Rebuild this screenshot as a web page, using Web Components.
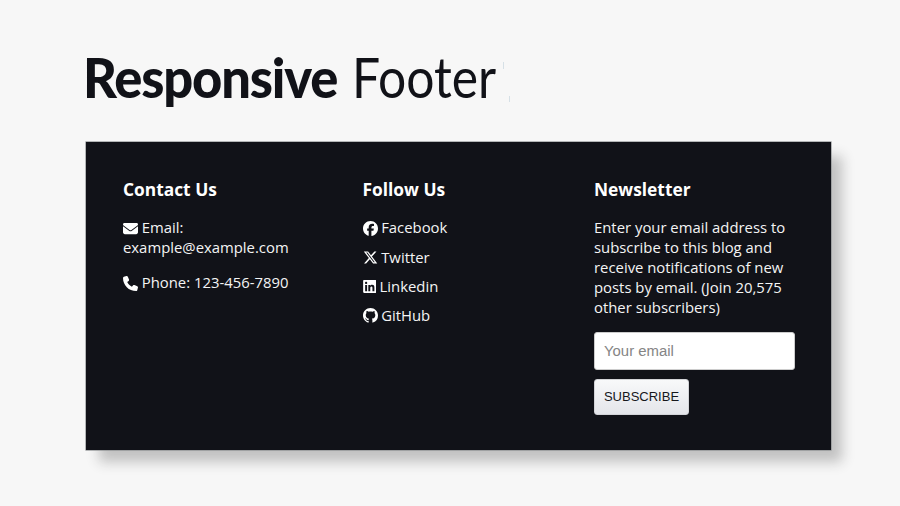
<!DOCTYPE html>
<html lang="en">
<head>
<meta charset="utf-8">
<title>Responsive Footer</title>
<style>
html,body{margin:0;height:100%}
body{background:#f7f7f7;overflow:hidden;font-family:"Open Sans",sans-serif}
</style>
</head>
<body>
<demo-page></demo-page>
<script>
const define = (name, markup) => customElements.define(name, class extends HTMLElement {
  constructor() {
    super();
    const t = document.createElement('template');
    t.innerHTML = markup;
    this.attachShadow({ mode: 'open' }).append(t.content.cloneNode(true));
  }
});

const icons = {
  envelope: ['0 0 512 512', 'M48 64C21.5 64 0 85.5 0 112c0 15.1 7.1 29.3 19.2 38.4L236.8 313.6c11.4 8.5 27 8.5 38.4 0L492.8 150.4c12.1-9.1 19.2-23.3 19.2-38.4c0-26.5-21.5-48-48-48H48zM0 176V384c0 35.3 28.7 64 64 64H448c35.3 0 64-28.7 64-64V176L294.4 339.2c-22.8 17.1-54 17.1-76.8 0L0 176z'],
  phone: ['0 0 512 512', 'M164.9 24.6c-7.7-18.6-28-28.5-47.4-23.2l-88 24C12.1 30.2 0 46 0 64C0 311.4 200.6 512 448 512c18 0 33.8-12.1 38.6-29.5l24-88c5.3-19.4-4.6-39.7-23.2-47.4l-96-40c-16.3-6.8-35.2-2.1-46.3 11.6L304.7 368C234.3 334.7 177.3 277.7 144 207.3L193.3 167c13.7-11.2 18.4-30 11.6-46.3l-40-96z'],
  facebook: ['0 0 512 512', 'M512 256C512 114.6 397.4 0 256 0S0 114.6 0 256C0 376 82.7 476.8 194.2 504.5V334.2H141.4V256h52.8V222.3c0-87.1 39.4-127.5 125-127.5c16.2 0 44.2 3.2 55.7 6.4V172c-6-.6-16.5-1-29.6-1c-42 0-58.2 15.9-58.2 57.2V256h83.6l-14.4 78.2H287V510.1C413.8 494.8 512 386.9 512 256z'],
  x: ['0 0 512 512', 'M389.2 48h70.6L305.6 224.2 487 464H345L233.7 318.6 106.5 464H35.8L200.7 275.5 26.8 48H172.4L272.9 180.9 389.2 48zM364.4 421.8h39.1L151.1 88h-42L364.4 421.8z'],
  linkedin: ['0 0 448 512', 'M416 32H31.9C14.3 32 0 46.5 0 64.3v383.4C0 465.5 14.3 480 31.9 480H416c17.6 0 32-14.5 32-32.3V64.3c0-17.8-14.4-32.3-32-32.3zM135.4 416H69V202.2h66.5V416zm-33.2-243c-21.3 0-38.5-17.3-38.5-38.5S80.9 96 102.2 96c21.2 0 38.5 17.3 38.5 38.5 0 21.3-17.2 38.5-38.5 38.5zm282.1 243h-66.4V312c0-24.8-.5-56.7-34.5-56.7-34.6 0-39.9 27-39.9 54.9V416h-66.4V202.2h63.7v29.2h.9c8.9-16.8 30.6-34.5 62.9-34.5 67.2 0 79.7 44.3 79.7 101.9V416z'],
  github: ['0 0 16 16', 'M8 0C3.58 0 0 3.58 0 8c0 3.54 2.29 6.53 5.47 7.59.4.07.55-.17.55-.38 0-.19-.01-.82-.01-1.49-2.01.37-2.53-.49-2.69-.94-.09-.23-.48-.94-.82-1.13-.28-.15-.68-.52-.01-.53.63-.01 1.08.58 1.23.82.72 1.21 1.87.87 2.33.66.07-.52.28-.87.51-1.07-1.78-.2-3.64-.89-3.64-3.95 0-.87.31-1.59.82-2.15-.08-.2-.36-1.02.08-2.12 0 0 .67-.21 2.2.82.64-.18 1.32-.27 2-.27s1.36.09 2 .27c1.53-1.04 2.2-.82 2.2-.82.44 1.1.16 1.92.08 2.12.51.56.82 1.27.82 2.15 0 3.07-1.87 3.75-3.65 3.95.29.25.54.73.54 1.48 0 1.07-.01 1.93-.01 2.2 0 .21.15.46.55.38A8.01 8.01 0 0016 8c0-4.42-3.58-8-8-8z']
};

customElements.define('app-icon', class extends HTMLElement {
  connectedCallback() {
    if (this.shadowRoot) return;
    const [box, d] = icons[this.getAttribute('name')];
    const w = box.startsWith('0 0 448') ? 13.4 : 15;
    this.attachShadow({ mode: 'open' }).innerHTML =
      `<style>:host{display:inline-block;height:15px;vertical-align:-2.3px;margin-right:3.7px}svg{display:block;height:15px;fill:#fff}</style>
       <svg width="${w}" height="15" viewBox="${box}"><path d="${d}"/></svg>`;
  }
});

define('page-title', `
<style>
:host{display:grid;grid-template-columns:270px 145px auto;height:66px;line-height:66px;font-family:Lato,sans-serif;color:#111218;white-space:nowrap}
b,span{display:block;font-size:55.5px;transform-origin:0 0}
b{font-weight:900;letter-spacing:-1.2px;margin-left:-3.4px;transform:scaleX(.945)}
span{font-weight:400;margin-left:-3.7px;transform:scaleX(.897)}
svg{display:block;margin-top:16px}
</style><b><slot name="strong"></slot></b><span><slot></slot></span>
<svg width="12" height="44" fill="none" stroke="#d6e0e6"><path d="M2.5 2v7M8.5 36v6"/></svg>`);

define('footer-card', `
<style>
:host{display:grid;grid-template-columns:239.5px 231.5px 201px;box-sizing:border-box;width:745px;height:308px;padding:37px 0 0 37px;
background:#111218;box-shadow:0 0 0 .6px #888b8d,12px 13px 12px -1px #c1c1c1}
</style><slot></slot>`);

define('footer-column', `
<style>
:host{display:block;color:#f4f4f4;font-size:14.86px;line-height:20px}
h2{margin:0 0 17.4px;color:#fff;font-size:17.35px;line-height:21px;font-weight:700}
</style><h2><slot name="heading"></slot></h2><slot></slot>`);

define('footer-item', `
<style>
:host{display:block;white-space:nowrap;margin-bottom:var(--gap,9.25px)}
</style><slot></slot>`);

define('newsletter-form', `
<style>
:host{display:flex;flex-direction:column;align-items:flex-start;gap:9px;margin-top:14.6px}
input,button{box-sizing:border-box;font-family:"Liberation Sans",sans-serif;border-radius:3px}
input{width:201px;height:38px;padding:0 9px;border:1px solid #ccc;background:#fff;font-size:14.9px}
input::placeholder{color:#858585;opacity:1}
button{width:95px;height:36px;padding:0 0 1px;border:1px solid #d3d4d8;background:linear-gradient(#f8f9fa,#e4e5ea);color:#16171c;font-size:13px}
</style>
<input type="email" placeholder="Your email"><button type="button">SUBSCRIBE</button>`);

define('demo-page', `
<style>
:host{display:flex;flex-direction:column;box-sizing:border-box;height:506px;padding:44px 0 0 86px;gap:32px}
.contact{--gap:15px}
</style>
<page-title><span slot="strong">Responsive</span>Footer</page-title>
<footer-card>
  <footer-column class="contact"><span slot="heading">Contact Us</span>
    <footer-item><app-icon name="envelope"></app-icon>Email:<br>example@example.com</footer-item>
    <footer-item><app-icon name="phone"></app-icon>Phone: 123-456-7890</footer-item>
  </footer-column>
  <footer-column><span slot="heading">Follow Us</span>
    <footer-item><app-icon name="facebook"></app-icon>Facebook</footer-item>
    <footer-item><app-icon name="x"></app-icon>Twitter</footer-item>
    <footer-item><app-icon name="linkedin"></app-icon>Linkedin</footer-item>
    <footer-item><app-icon name="github"></app-icon>GitHub</footer-item>
  </footer-column>
  <footer-column><span slot="heading">Newsletter</span>
    <footer-item style="--gap:0px">Enter your email address to<br>subscribe to this blog and<br>receive notifications of new<br>posts by email. (Join 20,575<br>other subscribers)</footer-item>
    <newsletter-form></newsletter-form>
  </footer-column>
</footer-card>`);
</script>
</body>
</html>
